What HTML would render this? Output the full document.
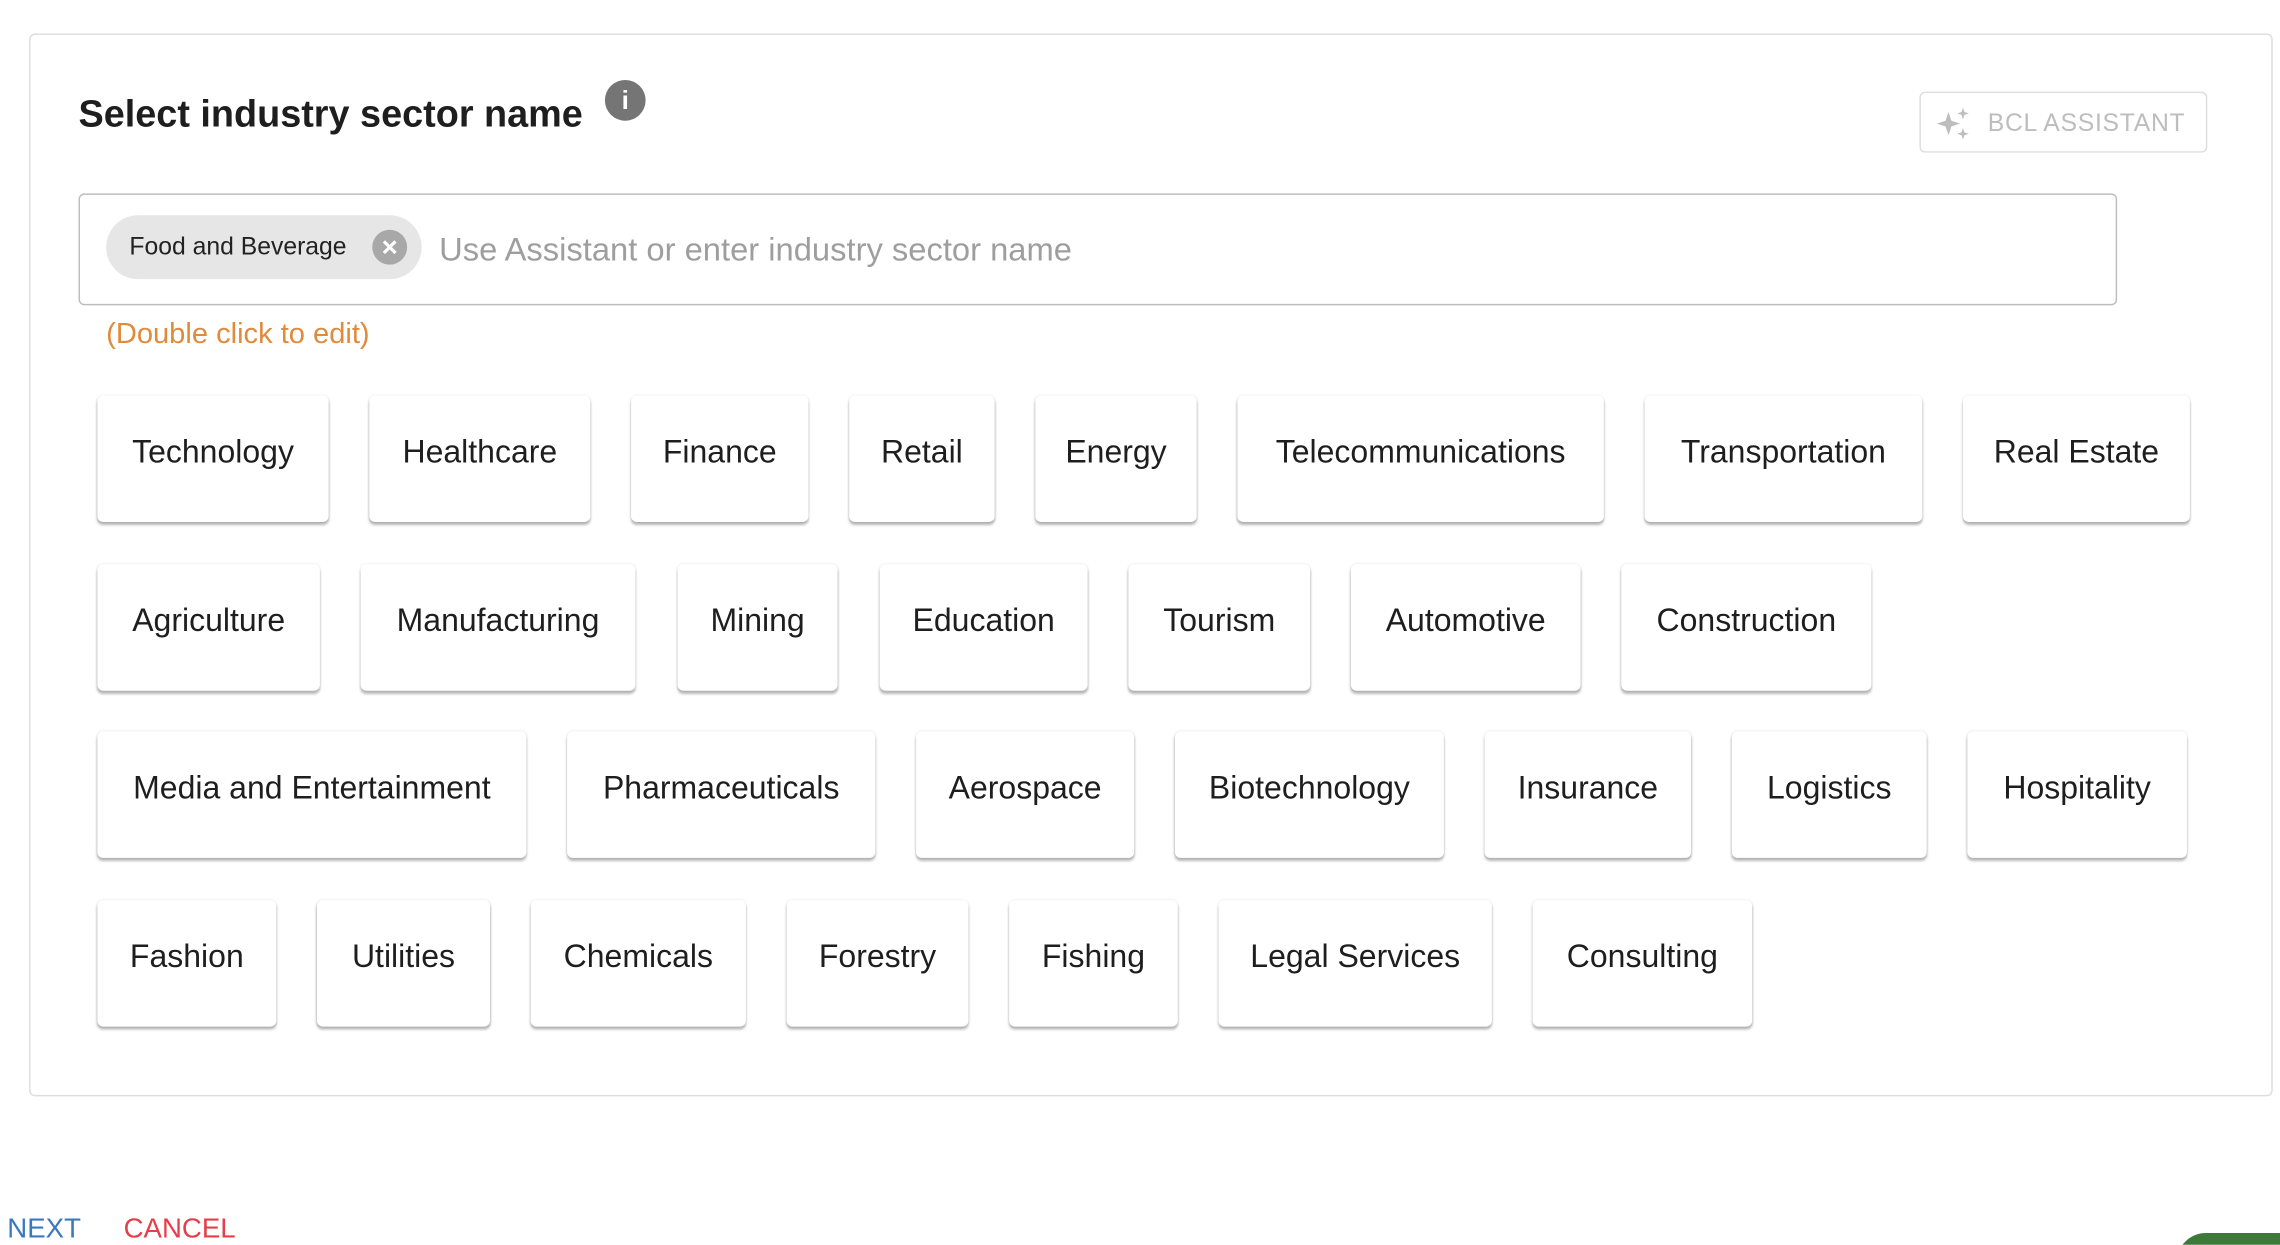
<!DOCTYPE html>
<html><head><meta charset="utf-8">
<style>
html,body{margin:0;padding:0;background:#fff;overflow:hidden;width:2280px;height:1244px;}
#w{position:absolute;left:0;top:0;width:1568px;height:856px;overflow:hidden;transform:scale(1.45408);transform-origin:0 0;font-family:"Liberation Sans",Roboto,sans-serif;}
.abs{position:absolute;}
.card{position:absolute;left:20px;top:23px;width:1541px;height:729px;border:1px solid #ddd;border-radius:4px;}
.t{position:absolute;left:54px;top:63px;font-size:26px;font-weight:bold;color:#1e1e1e;}
.info{position:absolute;left:416px;top:55px;width:28px;height:28px;border-radius:50%;background:#757575;color:#fff;font-weight:bold;font-size:18px;text-align:center;line-height:28px;}
.btn{position:absolute;left:1320px;top:63px;width:196px;height:40px;border:1px solid #ddd;border-radius:4px;color:#bdbdbd;font-size:17px;font-weight:500;letter-spacing:.5px;}
.btn span{position:absolute;left:46px;top:11px;}
.inp{position:absolute;left:54px;top:133px;width:1400px;height:75px;border:1px solid #bdbdbd;border-radius:4px;}
.chip{position:absolute;left:18px;top:14px;width:217px;height:44px;border-radius:22px;background:#e6e6e6;}
.chip span{position:absolute;left:16px;top:12px;font-size:17px;color:#222;}
.x{position:absolute;left:183px;top:10px;width:24px;height:24px;border-radius:50%;background:#a8a8a8;}
.ph{position:absolute;left:247px;top:25px;font-size:22.5px;color:#9e9e9e;}
.hint{position:absolute;left:73px;top:219px;font-size:20px;color:#e08a3c;}
.c{position:absolute;height:87px;box-sizing:border-box;padding-bottom:10px;background:#fff;border-radius:4px;box-shadow:0 2px 2px rgba(0,0,0,.28),0 0 2px rgba(0,0,0,.1);font-size:22px;color:#1e1e1e;display:flex;align-items:center;justify-content:center;white-space:nowrap;}
.nx{position:absolute;left:5px;top:835px;font-size:19px;color:#3a78c0;}
.cn{position:absolute;left:85px;top:835px;font-size:19px;color:#e53f4a;}
.g{position:absolute;left:1497px;top:848px;width:120px;height:40px;border-radius:20px;background:#3d7a3a;}
</style></head><body><div id="w">
<div class="card"></div>
<div class="t">Select industry sector name</div>
<div class="info">i</div>
<div class="btn"><svg class="abs" style="left:10px;top:8px" width="26" height="26" viewBox="0 0 26 26"><path d="M9 5 L11 11 L17 13 L11 15 L9 21 L7 15 L1 13 L7 11Z M19 2 L20 5 L23 6 L20 7 L19 10 L18 7 L15 6 L18 5Z M19 16 L20 19 L23 20 L20 21 L19 24 L18 21 L15 20 L18 19Z" fill="#bdbdbd"/></svg><span>BCL ASSISTANT</span></div>
<div class="inp"><div class="chip"><span>Food and Beverage</span><div class="x"><svg width="24" height="24"><path d="M8 8L16 16M16 8L8 16" stroke="#fff" stroke-width="2.2"/></svg></div></div><div class="ph">Use Assistant or enter industry sector name</div></div>
<div class="hint">(Double click to edit)</div>

<div class="c" style="left:67px;top:272px;width:159px">Technology</div>
<div class="c" style="left:254px;top:272px;width:152px">Healthcare</div>
<div class="c" style="left:434px;top:272px;width:122px">Finance</div>
<div class="c" style="left:584px;top:272px;width:100px">Retail</div>
<div class="c" style="left:712px;top:272px;width:111px">Energy</div>
<div class="c" style="left:851px;top:272px;width:252px">Telecommunications</div>
<div class="c" style="left:1131px;top:272px;width:191px">Transportation</div>
<div class="c" style="left:1350px;top:272px;width:156px">Real Estate</div>

<div class="c" style="left:67px;top:388px;width:153px">Agriculture</div>
<div class="c" style="left:248px;top:388px;width:189px">Manufacturing</div>
<div class="c" style="left:466px;top:388px;width:110px">Mining</div>
<div class="c" style="left:605px;top:388px;width:143px">Education</div>
<div class="c" style="left:776px;top:388px;width:125px">Tourism</div>
<div class="c" style="left:929px;top:388px;width:158px">Automotive</div>
<div class="c" style="left:1115px;top:388px;width:172px">Construction</div>

<div class="c" style="left:67px;top:503px;width:295px">Media and Entertainment</div>
<div class="c" style="left:390px;top:503px;width:212px">Pharmaceuticals</div>
<div class="c" style="left:630px;top:503px;width:150px">Aerospace</div>
<div class="c" style="left:808px;top:503px;width:185px">Biotechnology</div>
<div class="c" style="left:1021px;top:503px;width:142px">Insurance</div>
<div class="c" style="left:1191px;top:503px;width:134px">Logistics</div>
<div class="c" style="left:1353px;top:503px;width:151px">Hospitality</div>

<div class="c" style="left:67px;top:619px;width:123px">Fashion</div>
<div class="c" style="left:218px;top:619px;width:119px">Utilities</div>
<div class="c" style="left:365px;top:619px;width:148px">Chemicals</div>
<div class="c" style="left:541px;top:619px;width:125px">Forestry</div>
<div class="c" style="left:694px;top:619px;width:116px">Fishing</div>
<div class="c" style="left:838px;top:619px;width:188px">Legal Services</div>
<div class="c" style="left:1054px;top:619px;width:151px">Consulting</div>

<div class="nx">NEXT</div>
<div class="cn">CANCEL</div>
<div class="g"></div>
</div></body></html>
